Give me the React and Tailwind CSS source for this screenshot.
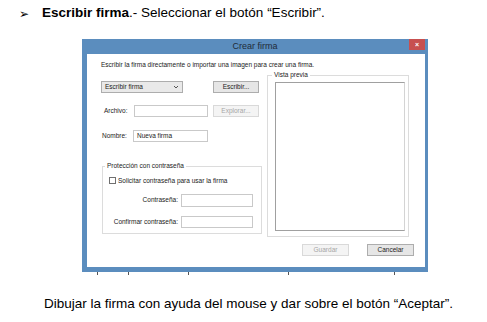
// Screenshot of a manual page: "Crear firma" dialog between two instruction lines

const dialogFont = { fontFamily: '"Liberation Sans", Arial, sans-serif' };

const Input = ({ w, h = "h-[12px]", children }) => (
  <div className={`${w} ${h} border border-[#c9c9c9] bg-white flex items-center pl-[3px] text-[6.5px] text-[#222]`}>
    {children}
  </div>
);

const Button = ({ label, w = "w-[46px]", disabled }) => (
  <div
    className={`${w} h-[12px] flex items-center justify-center text-[6.5px] border ${
      disabled
        ? "border-[#d9d9d9] bg-[#f4f4f4] text-[#a6a6a6]"
        : "border-[#adadad] bg-[#e6e6e6] text-[#222]"
    }`}
  >
    {label}
  </div>
);

const CrearFirma = () => {
  return (
    <div className="ml-[82px] w-[346px] flex flex-col" style={dialogFont}>
      {/* Title bar */}
      <div className="h-[15px] bg-[#5b8dbe] flex items-start relative">
        <div className="flex-1 text-center text-[9px] leading-[15px] text-[#1f2b38]">Crear firma</div>
        <div className="absolute right-[3px] top-0 w-[16px] h-[11px] bg-[#c75050] flex items-center justify-center text-white text-[7px] leading-none font-bold">
          ×
        </div>
      </div>

      {/* Body with window border */}
      <div className="bg-[#5b8dbe] pl-[5px] pr-[3px] pb-[5px]">
        <div className="bg-white h-[213px] flex flex-col text-[#222]">
          <div className="ml-[14px] mt-[6px] text-[6.5px] leading-[9px]">
            Escribir la firma directamente o importar una imagen para crear una firma.
          </div>

          <div className="flex ml-[14px] mt-[2px]">
            {/* Left column */}
            <div className="w-[161px] flex flex-col pt-[10px]">
              <div className="flex items-center">
                <div className="w-[82px] h-[12px] border border-[#adadad] bg-[#e9e9e9] flex items-center justify-between px-[3px] text-[6.5px]">
                  <span>Escribir firma</span>
                  <svg width="6" height="4" viewBox="0 0 6 4">
                    <path d="M1 1 L3 3 L5 1" stroke="#444" strokeWidth="0.9" fill="none" />
                  </svg>
                </div>
                <div className="ml-[30px]">
                  <Button label="Escribir..." />
                </div>
              </div>

              <div className="flex items-center mt-[12px]">
                <div className="w-[33px] pl-[3px] text-[6.5px]">Archivo:</div>
                <Input w="w-[74px]" />
                <div className="ml-[5px]">
                  <Button label="Explorar..." disabled />
                </div>
              </div>

              <div className="flex items-center mt-[13px]">
                <div className="w-[32px] pl-[1px] text-[6.5px]">Nombre:</div>
                <Input w="w-[75px]">Nueva firma</Input>
              </div>

              <fieldset className="ml-[1px] mt-[20px] w-[160px] h-[72px] border border-[#dcdcdc] px-[6px]">
                <legend className="ml-[-4px] px-[2px] text-[6.5px] leading-[8px]">Protección con contraseña</legend>
                <div className="flex items-center mt-[6px]">
                  <div className="w-[7px] h-[7px] border border-[#707070] bg-white" />
                  <span className="ml-[2px] text-[6.5px]">Solicitar contraseña para usar la firma</span>
                </div>
                <div className="flex items-center mt-[8px]">
                  <div className="w-[72px] text-right pr-[3px] text-[6.5px]">Contraseña:</div>
                  <Input w="w-[72px]" h="h-[13px]" />
                </div>
                <div className="flex items-center mt-[9px]">
                  <div className="w-[72px] text-right pr-[3px] text-[6.5px]">Confirmar contraseña:</div>
                  <Input w="w-[72px]" />
                </div>
              </fieldset>
            </div>

            {/* Right column: preview */}
            <fieldset className="ml-[5px] w-[142px] h-[166px] border border-[#dcdcdc] pl-[7px] pr-[3px]">
              <legend className="ml-[-3px] px-[2px] text-[6.5px] leading-[8px]">Vista previa</legend>
              <div className="mt-[3px] w-[130px] h-[149px] border border-[#a0a0a0] border-r-[#d4d4d4] bg-white" />
            </fieldset>
          </div>

          <div className="flex justify-end gap-[18px] mr-[11px] mt-[7px]">
            <Button label="Guardar" w="w-[47px]" disabled />
            <Button label="Cancelar" w="w-[47px]" />
          </div>
        </div>
      </div>
    </div>
  );
};

export default function App() {
  return (
    <div className="w-[487px] h-[322px] bg-white overflow-hidden" style={{ fontFamily: '"Liberation Sans", Arial, sans-serif' }}>
      <div className="flex items-center pt-[5px] h-[22px] text-[13.5px] text-black">
        <span className="ml-[19px] text-[12px]">➢</span>
        <span className="ml-[13px]">
          <b>Escribir firma</b>.- Seleccionar el botón “Escribir”.
        </span>
      </div>

      <div className="mt-[17px]">
        <CrearFirma />
      </div>

      {/* remnants of the table grid under the screenshot */}
      <div className="flex h-[3px]">
        <div className="ml-[97px] w-px bg-[#555]" />
        <div className="ml-[30px] w-px bg-[#555]" />
        <div className="ml-[59px] w-px bg-[#555]" />
        <div className="ml-[99px] w-px bg-[#555]" />
        <div className="ml-[105px] w-px bg-[#555]" />
      </div>

      <div className="mt-[19px] ml-[44px] text-[13.5px] text-black">
        Dibujar la firma con ayuda del mouse y dar sobre el botón “Aceptar”.
      </div>
    </div>
  );
}
